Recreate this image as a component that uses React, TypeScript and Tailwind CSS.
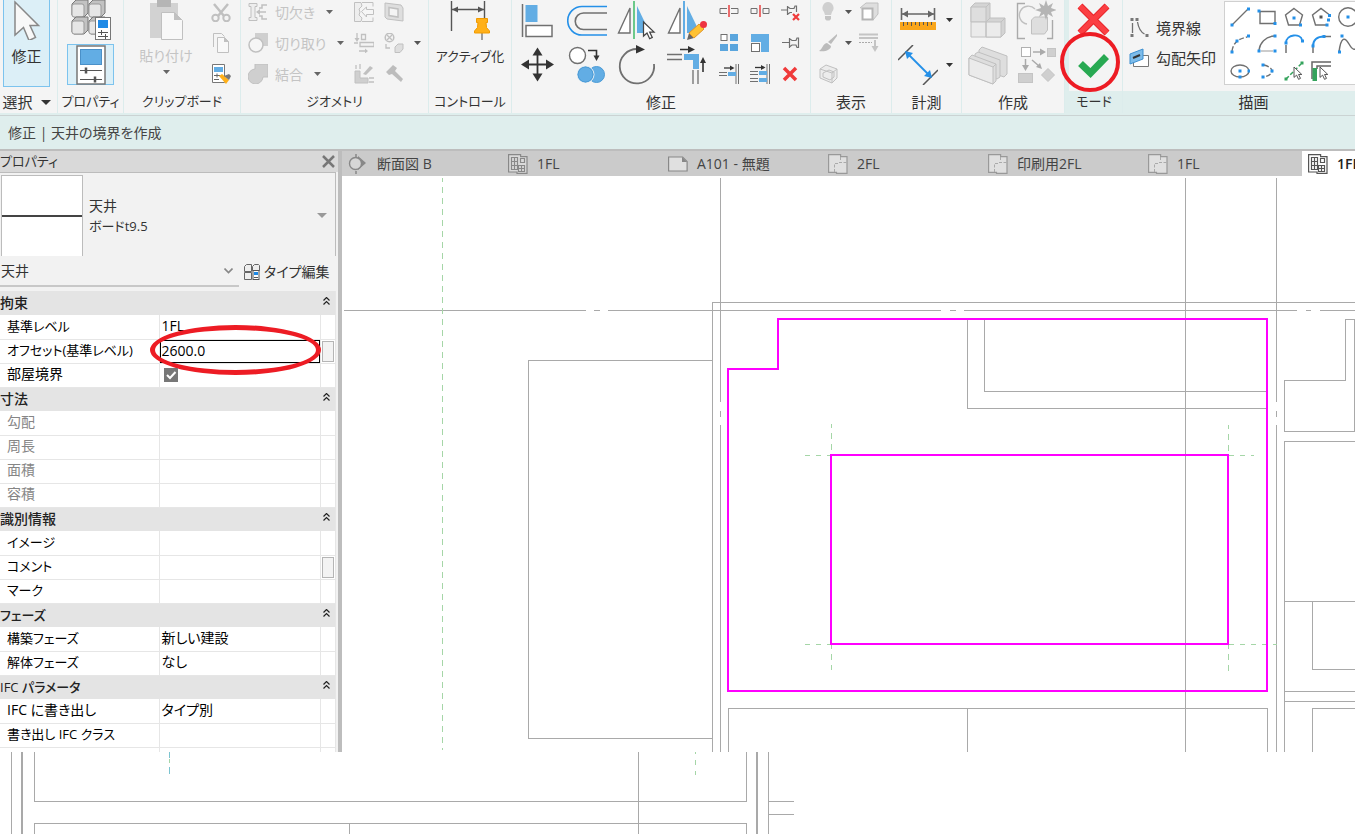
import { Fragment, ReactNode } from 'react';

interface IconProps {
  size?: number;
  children: ReactNode;
}

function Icon({ size = 20, children }: IconProps) {
  return (
    <svg width={size} height={size} viewBox={`0 0 ${size} ${size}`} fill="none" className="block shrink-0" aria-hidden="true">
      {children}
    </svg>
  );
}

function Caret({ className = 'h-[4px] w-[7px] text-[#555]' }: { className?: string }) {
  return (
    <svg viewBox="0 0 7 4" preserveAspectRatio="none" className={`block shrink-0 ${className}`} aria-hidden="true">
      <path d="M0 0h7L3.5 4z" fill="currentColor" />
    </svg>
  );
}

function Cursor({ x, y, scale = 1 }: { x: number; y: number; scale?: number }) {
  return (
    <path
      d="M0 0v16l4-3.500 3 6.500 3-1.500-3-6h5z"
      transform={`translate(${x} ${y}) scale(${scale})`}
      fill="#fff"
      stroke="#444"
      strokeWidth="1.4"
    />
  );
}

// blue grips on the draw tools
function Grips({ at, color = '#2490e8' }: { at: number[][]; color?: string }) {
  return (
    <>
      {at.map(([x, y]) => (
        <rect key={`${x}-${y}`} x={x - 1.5} y={y - 1.5} width="3" height="3" fill={color} />
      ))}
    </>
  );
}

const OFF = '#c0c0c0';
const OFF_FILL = '#dedede';
const BLUE = '#62ade4';
const INK = '#333';
const LINE = '#707070';

/* ---------- 40px icons ---------- */

const ModifyIcon = () => (
  <Icon size={40}>
    <path d="M8 2v33l8.500-7.500 5.500 13 6.500-3-5.500-12h8.500z" fill="#f8f8f8" stroke="#888" strokeWidth="1.5" />
  </Icon>
);

const TypePropsIcon = () => (
  <Icon size={40}>
    {[[0, 0], [17, 0], [0, 17], [17, 17]].map(([x, y]) => (
      <g key={`${x}${y}`} transform={`translate(${x} ${y})`} stroke="#777">
        <path d="M1 4l4-4h12v13l-4 4H3l-2-2z" fill="#c2c2c2" />
        <rect x="1" y="4" width="12" height="13" rx="2" fill="#e6e6e6" stroke="#999" />
      </g>
    ))}
    <rect x="24.500" y="17.500" width="15" height="22" fill="#fff" stroke="#777" />
    <rect x="27" y="20" width="10" height="8" fill="#1f8ae6" />
    <path d="M27 32.500h10M27 36.500h10M30.500 30v5M34.500 34v5" stroke="#555" />
  </Icon>
);

const PropertiesIcon = () => (
  <Icon size={40}>
    <rect x="6" y="1" width="28" height="38" fill="#fff" stroke="#777" strokeWidth="1.500" />
    <rect x="9.500" y="4.500" width="21" height="15" fill={BLUE} stroke="#4a90c8" />
    <path d="M9 25.500h22M9 34.500h22" stroke="#555" strokeWidth="1.200" />
    <path d="M15 22.500v6M24 31.500v6" stroke="#555" strokeWidth="2.500" />
  </Icon>
);

const PasteIcon = () => (
  <Icon size={40}>
    <path d="M4 3h28v35H4z" fill="#d2d2d2" />
    <path d="M11 0h14v7H11z" fill="#b5b5b5" />
    <path d="M15.500 12.500h13l8 8v19h-21z" fill="#f8f8f8" stroke={OFF} />
    <path d="M28 12v8h8z" fill={OFF} />
  </Icon>
);

const ActivateIcon = () => (
  <Icon size={40}>
    <path d="M1.500 1v30M34.500 1v17M2 9.500h32" stroke="#555" strokeWidth="1.400" />
    <path d="M2 9.500l6-3v6zM34 9.500l-6-3v6z" fill="#555" />
    <path d="M32 33v7" stroke="#777" strokeWidth="1.400" />
    <path d="M26.500 18.500h11v4H36l.500 5 3 3.500v2h-15v-2l3-3.500.500-5h-1.500z" fill="#ffb019" stroke="#f09a00" />
  </Icon>
);

const AlignIcon = () => (
  <Icon size={40}>
    <path d="M5.500 4v33" stroke={LINE} strokeWidth="1.500" />
    <rect x="8.500" y="5" width="12" height="17" fill={BLUE} />
    <rect x="9" y="25.500" width="26" height="11" fill="#fff" stroke={LINE} strokeWidth="1.500" />
  </Icon>
);

const OffsetIcon = () => (
  <Icon size={40}>
    <path d="M40 6.500H15a14.200 14.200 0 0 0 0 28.500h25" stroke="#2490e8" strokeWidth="1.600" />
    <path d="M40 13H16.500a8.200 8.200 0 0 0 0 16.500H40" stroke={LINE} strokeWidth="1.600" />
  </Icon>
);

const MirrorPickIcon = () => (
  <Icon size={40}>
    <path d="M1.500 33h11.500V8z" fill="#fff" stroke={LINE} strokeWidth="1.400" />
    <path d="M17 1v38" stroke="#6cc98a" strokeWidth="2" />
    <path d="M20 6l13 27H20z" fill={BLUE} />
    <Cursor x={26.500} y={22} scale={0.88} />
  </Icon>
);

const MirrorDrawIcon = () => (
  <Icon size={40}>
    <path d="M1.500 33h11.500V8z" fill="#fff" stroke={LINE} strokeWidth="1.400" />
    <path d="M17 1v38" stroke={BLUE} strokeWidth="2" />
    <path d="M20 6l13 27H20z" fill={BLUE} />
    <path d="M20 40l2-7 5 5z" fill="#666" />
    <path d="M22 33l10-9 5 5-10 9z" fill="#ffc233" stroke="#e0952a" />
    <circle cx="36.500" cy="24.500" r="3.500" fill="#ee3340" />
  </Icon>
);

const MoveIcon = () => (
  <Icon size={40}>
    <path d="M20.500 7v25M8 19.500h25" stroke={INK} strokeWidth="1.800" />
    <path d="M20.500 2.500l5 8h-10zM20.500 36.500l5-8h-10zM4 19.500l8-5v10zM37 19.500l-8-5v10z" fill={INK} />
  </Icon>
);

const CopyIcon = () => (
  <Icon size={40}>
    <circle cx="10.500" cy="10.500" r="8" fill="#fff" stroke={LINE} strokeWidth="1.400" />
    <path d="M21 5.500h8.500V12" stroke={INK} strokeWidth="1.600" />
    <path d="M26.500 10.500h6l-3 5.500z" fill={INK} />
    <circle cx="29.500" cy="29.500" r="8" fill={BLUE} stroke="#4b9bd6" />
    <circle cx="18.500" cy="29.500" r="8.500" fill={BLUE} stroke="#f4f4f4" />
    <circle cx="18.500" cy="29.500" r="7.500" stroke="#4b9bd6" />
  </Icon>
);

const RotateIcon = () => (
  <Icon size={40}>
    <path d="M37 19a17.200 17.200 0 1 1-17-15" stroke={LINE} strokeWidth="1.800" />
    <path d="M19 0l9 4.500-9 4z" fill={INK} />
  </Icon>
);

const TrimIcon = () => (
  <Icon size={40}>
    <path d="M0 9.500h15M0 14.500h15M26 25v14M31 25v14" stroke={LINE} strokeWidth="1.300" />
    <path d="M17 9h15v15h-6v-9h-9z" fill={BLUE} />
    <path d="M13 4.500h10M36 27V17" stroke={INK} strokeWidth="1.600" />
    <path d="M21 1l7 3.500-7 3.500zM33 18l3-6 3 6z" fill={INK} />
  </Icon>
);

const MeasureIcon = () => (
  <Icon size={40}>
    <path d="M3.500 8v12M36.500 8v12M4 14h32" stroke="#666" strokeWidth="1.600" />
    <path d="M4 14l6-3.500v7zM36 14l-6-3.500v7z" fill="#666" />
    <rect x="2" y="22" width="36" height="8" fill="#f9a51a" />
    <path d="M5.500 22v4M9.500 22v3M13.500 22v4M17.500 22v3M21.500 22v4M25.500 22v3M29.500 22v4M33.500 22v3" stroke="#555" />
  </Icon>
);

const DimensionIcon = () => (
  <Icon size={40}>
    <path d="M0 15L15 0M25 40l15-15" stroke="#555" strokeWidth="1.500" />
    <path d="M9 8l23 23" stroke="#2490e8" strokeWidth="1.800" />
    <path d="M7 6l8 2-6 6zM34 33l-8-2 6-6z" fill="#2490e8" />
  </Icon>
);

const GroupIcon = () => (
  <Icon size={40}>
    <g stroke={OFF} strokeLinejoin="round">
      <path d="M3 7l4-4h15v15l-4 4H3z" fill="#d4d4d4" />
      <path d="M3 7h15v15H3z" fill={OFF_FILL} />
      <path d="M18 22l4-4h15v15l-4 4H18z" fill="#d4d4d4" />
      <path d="M3 22h15v15H3zM18 22h15v15H18z" fill="#ebebeb" />
      <path d="M18 7l4-4M33 22l4-4" />
    </g>
  </Icon>
);

const CreateGroupIcon = () => (
  <Icon size={40}>
    <path d="M9 3.500H1.500v35H9M31 38.500h5.500V20" stroke="#aaa" strokeWidth="1.400" />
    <path d="M19 9a9 9 0 1 0-8 15" stroke={OFF} strokeWidth="1.400" />
    <path d="M15.500 20l3-3h13v13l-3 4h-13z" fill={OFF_FILL} stroke={OFF} />
    <path d="M30 0l2 6 5-3-2 5 6 2-6 2 2 5-5-3-2 6-2-6-5 3 2-5-6-2 6-2-2-5 5 3z" fill="#b5b5b5" />
  </Icon>
);

const AssemblyIcon = () => (
  <Icon size={40}>
    <g stroke={OFF} strokeLinejoin="round" fill={OFF_FILL}>
      <path d="M11 5l3-3 25 9v18l-3 3-25-9z" />
      <path d="M7 9l3-2 22 8v17l-3 2-22-8z" />
      <path d="M1 13l3-3 24 9v17l-3 3-24-9z" />
      <path d="M1 13l24 9v17l-24-9z" fill="#ebebeb" />
      <path d="M25 22l3-3" />
    </g>
  </Icon>
);

const PartsIcon = () => (
  <Icon size={40}>
    <rect x="5.500" y="2.500" width="9" height="9" fill="#fff" stroke="#b0b0b0" />
    <g fill="#cfcfcf" stroke="#c4c4c4">
      <rect x="31.500" y="3.500" width="8" height="8" />
      <rect x="2.500" y="28.500" width="14" height="9" />
      <path d="M32 23.500l6.500 6.500-6.500 6.500-6.500-6.500z" />
    </g>
    <path d="M17 7h8M9.500 14v8M16 15l7 6" stroke="#aaa" strokeWidth="1.500" />
    <path d="M24 3.500l6 3.500-6 3.500zM6 20h7l-3.500 6zM26 24l-2-6-4 4z" fill="#aaa" />
  </Icon>
);

const CancelIcon = () => (
  <Icon size={40}>
    <path d="M7 6l27 27M34 6L7 33" stroke="#e8262c" strokeWidth="7" />
    <path d="M7 6l27 27M34 6L7 33" stroke="#fb3f43" strokeWidth="5" />
  </Icon>
);

const FinishIcon = () => (
  <Icon size={40}>
    <path d="M7.500 18.500l10 9.500L33.500 11.500" stroke="#28a952" strokeWidth="7" />
  </Icon>
);

/* ---------- 20px icons ---------- */

const CutIcon = () => (
  <Icon>
    <path d="M3 2l10 12M17 2L7 14" stroke={OFF} strokeWidth="2.500" />
    <circle cx="4.500" cy="16" r="3.200" stroke={OFF} strokeWidth="2" />
    <circle cx="15.500" cy="16" r="3.200" stroke={OFF} strokeWidth="2" />
  </Icon>
);

const CopyClipIcon = () => (
  <Icon>
    <path d="M2.500 14V.500h8l3 3" stroke={OFF} />
    <path d="M6.500 4.500h7l4 4v11h-11z" fill="#f8f8f8" stroke={OFF} />
    <path d="M13 4v5h5z" fill={OFF} />
  </Icon>
);

const MatchIcon = () => (
  <Icon>
    <path d="M1.500.500h12v18h-12z" fill="#fff" stroke="#777" />
    <rect x="3" y="3" width="9" height="5" fill={BLUE} />
    <path d="M3 11.500h6M3 15.500h5M6 9.500v4" stroke="#666" />
    <path d="M8 12l3-2 7 6-3 4z" fill="#ffb019" />
    <path d="M13 12l5-2 2 2-2 4z" fill="#777" />
  </Icon>
);

const CopeIcon = () => (
  <Icon>
    <path d="M1 1.500h8v3H7v11h2v3H1v-3h2v-11H1z" fill="#eee" stroke={OFF} />
    <path d="M19 3h-5v3l-3 0M19 17h-5v-3h-3M9 10h9" stroke={OFF} strokeWidth="1.500" />
    <path d="M8 10l4-3v6z" fill={OFF} />
  </Icon>
);

const CutGeomIcon = () => (
  <Icon>
    <path d="M7 0h13v13h-5L7 5z" fill="#cfcfcf" />
    <circle cx="8" cy="12" r="7" fill="#f6f6f6" stroke={OFF} strokeWidth="1.500" />
  </Icon>
);

const JoinIcon = () => (
  <Icon>
    <path d="M7 0h13v13h-5a7.500 7.500 0 1 1-8-8z" fill="#cfcfcf" stroke={OFF} />
  </Icon>
);

const WallOpenIcon = () => (
  <Icon>
    <path d="M8 4l-1-3.500H.500v19H7L8 16l-3-3 1-3-1-3z" fill="#eee" stroke={OFF} />
    <path d="M7.500 9.500l5-4.500v2.500h7v5h-7V15z" fill="#f6f6f6" stroke={OFF} />
    <path d="M8 .500h11v4M8 19.500h11v-4" stroke={OFF} />
  </Icon>
);

const FaceIcon = () => (
  <Icon>
    <path d="M1 1l16 2 2 3v13L3 17l-2-2z" fill={OFF_FILL} stroke={OFF} />
    <path d="M5 5.500l9 1.500v8l-9-1.500z" fill="#f4f4f4" stroke={OFF} strokeWidth="1.500" />
  </Icon>
);

const BeamIcon = () => (
  <Icon>
    <path d="M3 0v6M7.500 1.500h4v5h-4zM6 9.500h14v4H6zM0 10h4M5 18h6" stroke={OFF} strokeWidth="1.300" />
    <path d="M.500 5h5L3 9zM11 15.500v5l3-2.500z" fill={OFF} />
  </Icon>
);

const SplitFaceIcon = () => (
  <Icon>
    <circle cx="5.500" cy="4.500" r="4.300" stroke={OFF} strokeWidth="1.500" />
    <path d="M3 2l5 5M8 2L3 7M2 11v4h4" stroke={OFF} strokeWidth="1.300" />
    <path d="M11 14l3-3h5v5l-3 3.500h-5z" fill={OFF_FILL} stroke={OFF} />
  </Icon>
);

const PaintJoinIcon = () => (
  <Icon>
    <path d="M1 7h5v7h8v5H1z" fill="#cfcfcf" stroke={OFF} />
    <path d="M2 1v4M6 0v5M15 14h5M15 18h5" stroke={OFF} strokeWidth="1.300" />
    <path d="M9 10l7-8 3 2-7 7z" fill={OFF} />
  </Icon>
);

const HammerIcon = () => (
  <Icon>
    <path d="M2 8l7-7 4 3-2 3 8 8-2 3-9-8-3 1z" fill="#bdbdbd" />
  </Icon>
);

const SplitIcon = () => (
  <Icon>
    <path d="M8 6.500H1v5h7M12 6.500h7v5h-7" stroke={LINE} />
    <path d="M10 3v12" stroke="#e84040" strokeWidth="1.500" />
  </Icon>
);

const SplitGapIcon = () => (
  <Icon>
    <path d="M1 6.500h6v5H1zM13 6.500h6v5h-6z" stroke={LINE} />
    <path d="M10 3v12" stroke="#e84040" strokeWidth="1.500" />
  </Icon>
);

const PinIcon = () => (
  <Icon>
    <path
      d="M1 9.500h7M8.500 5v10M9 6l2 1.500h4l1-2.500h1.500v9.500H16L15 12h-4l-2 1.500"
      stroke={LINE}
      strokeWidth="1.200"
    />
  </Icon>
);

const UnpinIcon = () => (
  <Icon>
    <path d="M0 8h6M6.500 4v9M7 5l2 1.500h4l1-2.500h1.500v6M7 12l2-1.500h2" stroke={LINE} strokeWidth="1.200" />
    <path d="M12 12l6 6M18 12l-6 6" stroke="#f03a3a" strokeWidth="2.200" />
  </Icon>
);

const ArrayIcon = () => (
  <Icon>
    <rect x="2" y="1.500" width="6" height="6" fill="#fff" stroke={LINE} />
    <path d="M11 1h8v7h-8zM1 11h8v7H1zM11 11h8v7h-8z" fill="#5aa5dd" />
  </Icon>
);

const ScaleIcon = () => (
  <Icon>
    <path d="M1 1h18v18h-8V9H1z" fill={BLUE} />
    <rect x="1.500" y="10.500" width="8" height="8" fill="#fff" stroke={LINE} />
  </Icon>
);

const TrimSingleIcon = () => (
  <Icon>
    <path d="M0 8.500h8M0 11.500h8M17 0v20M19.500 0v20" stroke={LINE} />
    <path d="M9 8h8v4H9z" fill={BLUE} />
    <path d="M5 4h7" stroke={INK} strokeWidth="1.300" />
    <path d="M11 1.500L15.500 4 11 6.500z" fill={INK} />
  </Icon>
);

const TrimMultiIcon = () => (
  <Icon>
    <path d="M0 7.500h8M0 10.500h8M0 14.500h8M0 17.500h8M17 0v20M19.500 0v20" stroke={LINE} />
    <path d="M9 7h8v4H9zM9 14h8v4H9z" fill={BLUE} />
    <path d="M5 3.500h7" stroke={INK} strokeWidth="1.300" />
    <path d="M11 1l4.500 2.500L11 6z" fill={INK} />
  </Icon>
);

const DeleteIcon = () => (
  <Icon>
    <path d="M3 4l12 12M15 4L3 16" stroke="#f03a3a" strokeWidth="3.500" />
  </Icon>
);

const BulbIcon = () => (
  <Icon>
    <path d="M10 0a6 6 0 0 1 4 10l-1 3H7l-1-3a6 6 0 0 1 4-10z" fill="#cfcfcf" />
    <path d="M7 14h6v3l-1.500 1.500h-3L7 17z" fill="#c4c4c4" />
  </Icon>
);

const BrushIcon = () => (
  <Icon>
    <path d="M19 1L10 9l3 2 6-8z" fill="#bbb" />
    <path d="M9 10l4 3c0 4-6 6-12 5 4-2 3-7 8-8z" fill="#bbb" />
  </Icon>
);

const BoxIcon = () => (
  <Icon>
    <path d="M2 5l6-4 11 4v9l-5 5-12-5z" fill="#ececec" stroke={OFF} />
    <path d="M2 5l12 4 5-4M14 9v10M5 9l6-3 5 2v5l-4 3-7-3z" stroke={OFF} />
  </Icon>
);

const DisplaceIcon = () => (
  <Icon>
    <path d="M1 6l6-5h12v11l-5 6" fill={OFF_FILL} stroke={OFF} />
    <rect x="3.500" y="6.500" width="10" height="11" fill="#fff" stroke="#b5b5b5" strokeWidth="2" />
  </Icon>
);

const LineworkIcon = () => (
  <Icon>
    <path d="M0 1.500h19M0 5h19" stroke="#c4c4c4" strokeWidth="2" />
    <path d="M0 9.500h13" stroke="#aaa" strokeDasharray="2 1" />
    <path d="M16 7v7" stroke="#c4c4c4" strokeWidth="2" />
    <path d="M12.500 13h7L16 19z" fill="#c4c4c4" />
  </Icon>
);

const BoundaryIcon = () => (
  <Icon>
    <path d="M3.500 5v10M8.500 4c1 6 3 10 7 12" stroke={LINE} strokeWidth="1.300" />
    <Grips at={[[3, 1.500], [8, 1.500], [3, 17.500], [18, 17.500]]} color="#777" />
  </Icon>
);

const SlopeIcon = () => (
  <Icon>
    <path d="M4.500 7.500h15v11h-15z" fill="#fff" stroke="#777" />
    <path d="M1 6l13-5v10L1 16z" fill="#7dbcea" stroke="#3d8fd0" />
    <path d="M4 10l7-3" stroke="#333" strokeWidth="2" />
  </Icon>
);

const EditTypeIcon = () => (
  <Icon>
    <path d="M2.500 4.500l2-2h5v7h-7zM10.500 4.500l2-2h4l1 1v5h-7zM2.500 10.500h7v7h-7z" fill="#eee" stroke="#666" />
    <rect x="11" y="8.500" width="6" height="9" fill="#fff" stroke="#555" />
    <rect x="12" y="10" width="4" height="3" fill="#1f8ae6" />
    <path d="M12 15.500h4" stroke="#555" />
  </Icon>
);

/* view tabs */
const SectionTabIcon = () => (
  <Icon>
    <path d="M8 0v3M8 17v3" stroke="#888" strokeWidth="1.500" />
    <path d="M10 2l8 7-8 7z" fill="#888" />
    <circle cx="7.500" cy="9.500" r="6" fill="#d6d6d6" stroke="#888" strokeWidth="1.400" />
  </Icon>
);

const PlanTabIcon = ({ active = false }: { active?: boolean }) => (
  <Icon>
    <g stroke={active ? '#555' : '#888'} strokeWidth="1.200">
      <path d="M.600 18V.600h12v2h6.400v16.800H9V18z" fill={active ? '#fff' : '#dadada'} />
      <path d="M3.500 3.500h6v12h-6zM6.500 3.500v12M3.500 7.500h6M3.500 11.500h6M12.500 4.500h4v4h-4zM10.500 11.500h6v6h-6zM13.500 11.500v6M10.500 14.500h6" />
    </g>
  </Icon>
);

const SheetTabIcon = () => (
  <Icon>
    <path d="M.600 3h14l4.500 4.500V17H.600z" fill="#e0e0e0" stroke="#888" strokeWidth="1.200" />
    <path d="M14 3v5h5z" fill="#888" />
  </Icon>
);

const CeilingTabIcon = () => (
  <Icon>
    <path d="M.600 18.400V.600h12v2h6.400v16.800H8.500v-1z" fill="#e0e0e0" stroke="#999" strokeWidth="1.200" />
    <path d="M6.500 18V9.500h5M12.500 3v4M11 8.500h8" stroke="#aaa" strokeDasharray="3 1.500" />
  </Icon>
);

const drawTools: { name: string; icon: ReactNode }[] = [
  { name: '線分', icon: <><path d="M2 18L18 2" stroke={LINE} strokeWidth="1.300" /><Grips at={[[2, 18], [18.500, 2]]} /></> },
  { name: '長方形', icon: <><path d="M3 4.500h15v12H3z" stroke={LINE} strokeWidth="1.400" /><Grips at={[[2, 4], [18, 16.500]]} /></> },
  { name: '内接ポリゴン', icon: <><path d="M10 1.500l8.500 6.500-3 10h-11l-3-10z" stroke={LINE} strokeWidth="1.400" /><Grips at={[[10, 11], [16.500, 18]]} /></> },
  { name: '外接ポリゴン', icon: <><path d="M15.500 18h-11l-3-10L10 1.500l8 6" stroke={LINE} strokeWidth="1.400" /><Grips at={[[10, 10]]} color="#555" /><Grips at={[[18.500, 8.500], [17.500, 13], [16, 18]]} /></> },
  { name: '円', icon: <><circle cx="10" cy="10" r="9.300" stroke={LINE} strokeWidth="1.400" /><Grips at={[[10, 10]]} /></> },
  { name: '円弧 (始点-終点)', icon: <><path d="M2 17c1-7 5-12 15-14" stroke={LINE} strokeWidth="1.400" strokeDasharray="5 2" /><Grips at={[[2, 18], [7, 7], [18.500, 2]]} /></> },
  { name: '円弧 (中心)', icon: <><path d="M2 16C3 9 8 3 17 2" stroke={LINE} strokeWidth="1.400" /><path d="M4 17h12" stroke="#999" /><Grips at={[[2, 17], [18, 2], [18, 17]]} /></> },
  { name: '円弧 (接線)', icon: <><path d="M2 19v-8" stroke={LINE} strokeWidth="1.500" /><path d="M2 9C2 0 17-1 18 6" stroke="#2490e8" strokeWidth="1.800" /><Grips at={[[2, 9], [18.500, 7]]} /></> },
  { name: '円弧 (フィレット)', icon: <><path d="M2 19v-7M14 2.500h6" stroke={LINE} strokeWidth="1.500" /><path d="M2 12C2 6 6 2.500 13 2.500" stroke="#2490e8" strokeWidth="1.800" /><Grips at={[[2, 12], [13, 2.500]]} /></> },
  { name: 'スプライン', icon: <><path d="M1 18C3 2 7 3 11 10s6 6 9 3" stroke={LINE} strokeWidth="1.500" /><Grips at={[[1.500, 18], [4, 2]]} /></> },
  { name: '楕円', icon: <><ellipse cx="10" cy="10" rx="9" ry="6" stroke={LINE} strokeWidth="1.400" /><Grips at={[[10, 10], [19, 10], [10, 16]]} /></> },
  { name: '部分楕円', icon: <><path d="M7 4c4 1 8 3 8 6s-4 5-8 6" stroke={LINE} strokeWidth="1.400" strokeDasharray="5 2" /><Grips at={[[6, 4], [15, 10], [6, 16]]} /></> },
  { name: '線を選択', icon: <><path d="M2 18L17 3" stroke="#35a35c" strokeWidth="1.500" strokeDasharray="4 2" /><Grips at={[[2, 18], [18, 2]]} color="#35a35c" /><Cursor x={10} y={6} scale={0.65} /></> },
  { name: '壁を選択', icon: <><path d="M20 1H1v17M20 5H6v3" stroke="#666" strokeWidth="1.500" /><rect x="1.500" y="7" width="4.500" height="13" fill="#35a35c" /><Cursor x={9} y={6} scale={0.65} /></> },
];

interface PanelProps {
  label: string;
  className: string;
  labelClass?: string;
  labelEnd?: ReactNode;
  children: ReactNode;
}

function Panel({ label, className, labelClass = '', labelEnd, children }: PanelProps) {
  return (
    <section className={`flex h-[113px] shrink-0 flex-col border-r border-[#dcecec] bg-[#f4f4f4] ${className}`} aria-label={label}>
      <div className="flex h-[91px] shrink-0">{children}</div>
      <div className={`flex h-[22px] items-center justify-center gap-2 whitespace-nowrap ${labelClass}`}>
        {label}
        {labelEnd}
      </div>
    </section>
  );
}

function Tool({ name, children, className = '' }: { name: string; children: ReactNode; className?: string }) {
  return (
    <button type="button" aria-label={name} className={`flex items-center justify-center ${className}`}>
      {children}
    </button>
  );
}

function Ribbon() {
  return (
    <header className="flex overflow-hidden border-b border-[#cbd3d3] bg-[#dfeeed] pb-[2px] text-[15px] text-[#333]">
      <Panel label="選択" className="w-[58px]" labelClass="pr-1" labelEnd={<Caret className="h-[5px] w-[10px] text-[#333]" />}>
        <button type="button" className="mx-[3px] flex h-[87px] w-[47px] flex-col items-center border border-t-0 border-[#7cc3ee] bg-[#dceff7]">
          <ModifyIcon />
          <span className="mt-1.5 leading-5">修正</span>
        </button>
      </Panel>
      <Panel label="プロパティ" className="w-[66px] text-[13px]">
        <div className="flex w-full flex-col items-center gap-[4px]">
          <Tool name="タイプ プロパティ"><TypePropsIcon /></Tool>
          <Tool name="プロパティ パレット" className="h-[41px] w-[47px] border border-[#7cc3ee] bg-[#dceff7]"><PropertiesIcon /></Tool>
        </div>
      </Panel>
      <Panel label="クリップボード" className="w-[117px] text-[13px]">
        <button type="button" className="ml-3 flex w-[60px] flex-col items-center text-[14px] text-[#c4c4c4]">
          <PasteIcon />
          <span className="mt-1.5 leading-5">貼り付け</span>
          <Caret className="mt-1 h-[4px] w-[7px] text-[#666]" />
        </button>
        <div className="ml-[15px] flex flex-col gap-[11px] pt-[2px]">
          <Tool name="切り取り"><CutIcon /></Tool>
          <Tool name="コピー"><CopyClipIcon /></Tool>
          <Tool name="タイプ プロパティを一致"><MatchIcon /></Tool>
        </div>
      </Panel>
      <Panel label="ジオメトリ" className="w-[188px] text-[13px]">
        <div className="flex w-[105px] flex-col gap-[11px] pt-[2px] pl-[7px] text-[14px] text-[#c4c4c4]">
          <button type="button" className="flex h-5 items-center gap-[7px]"><CopeIcon /><span>切欠き</span><Caret className="ml-1 h-[4px] w-[7px] text-[#666]" /></button>
          <button type="button" className="flex h-5 items-center gap-[7px]"><CutGeomIcon /><span>切り取り</span><Caret className="ml-1 h-[4px] w-[7px] text-[#666]" /></button>
          <button type="button" className="flex h-5 items-center gap-[7px]"><JoinIcon /><span>結合</span><Caret className="ml-1 h-[4px] w-[7px] text-[#666]" /></button>
        </div>
        <div className="ml-[8px] grid h-[84px] grid-cols-[20px_20px_7px] items-center gap-x-[10px] gap-y-[11px] pt-[2px]">
          <Tool name="壁開口部"><WallOpenIcon /></Tool>
          <Tool name="面を分割"><FaceIcon /></Tool>
          <span />
          <Tool name="梁/柱の結合"><BeamIcon /></Tool>
          <Tool name="ペイント"><SplitFaceIcon /></Tool>
          <Caret />
          <Tool name="壁結合"><PaintJoinIcon /></Tool>
          <Tool name="解体"><HammerIcon /></Tool>
        </div>
      </Panel>
      <Panel label="コントロール" className="w-[83px] text-[13px]">
        <button type="button" className="flex w-full flex-col items-center whitespace-nowrap">
          <ActivateIcon />
          <span className="mt-1.5 text-[13px] leading-5">アクティブ化</span>
        </button>
      </Panel>
      <Panel label="修正" className="w-[299px]">
        <div className="ml-[5px] grid grid-cols-4 grid-rows-[40px_40px] gap-x-[10px] gap-y-[5px]">
          <Tool name="位置合わせ"><AlignIcon /></Tool>
          <Tool name="オフセット"><OffsetIcon /></Tool>
          <Tool name="鏡像化 - 軸を選択"><MirrorPickIcon /></Tool>
          <Tool name="鏡像化 - 軸を描画"><MirrorDrawIcon /></Tool>
          <Tool name="移動"><MoveIcon /></Tool>
          <Tool name="コピー"><CopyIcon /></Tool>
          <Tool name="回転"><RotateIcon /></Tool>
          <Tool name="コーナーへトリム/延長"><TrimIcon /></Tool>
        </div>
        <div className="ml-[12px] grid h-[84px] grid-cols-[20px_20px_20px] gap-x-[11px] gap-y-[11px] pt-[2px]">
          <Tool name="要素を分割"><SplitIcon /></Tool>
          <Tool name="隙間で分割"><SplitGapIcon /></Tool>
          <Tool name="ピンを外す"><UnpinIcon /></Tool>
          <Tool name="配列"><ArrayIcon /></Tool>
          <Tool name="尺度"><ScaleIcon /></Tool>
          <Tool name="ピン"><PinIcon /></Tool>
          <Tool name="単一要素をトリム"><TrimSingleIcon /></Tool>
          <Tool name="複数要素をトリム"><TrimMultiIcon /></Tool>
          <Tool name="削除"><DeleteIcon /></Tool>
        </div>
      </Panel>
      <Panel label="表示" className="w-[81px]">
        <div className="ml-[7px] grid h-[84px] grid-cols-[20px_7px_20px] items-center gap-x-[7px] gap-y-[11px] pt-[2px]">
          <Tool name="非表示"><BulbIcon /></Tool>
          <Caret />
          <Tool name="要素を移動表示"><DisplaceIcon /></Tool>
          <Tool name="グラフィックスを上書き"><BrushIcon /></Tool>
          <Caret />
          <Tool name="ラインワーク"><LineworkIcon /></Tool>
          <Tool name="選択ボックス"><BoxIcon /></Tool>
        </div>
      </Panel>
      <Panel label="計測" className="w-[70px]">
        <div className="ml-[6px] grid grid-cols-[40px_7px] grid-rows-[40px_40px] items-center gap-x-[8px] gap-y-[5px]">
          <Tool name="計測"><MeasureIcon /></Tool>
          <Caret className="h-[4px] w-[7px] text-[#333]" />
          <Tool name="寸法"><DimensionIcon /></Tool>
          <Caret className="h-[4px] w-[7px] text-[#333]" />
        </div>
      </Panel>
      <Panel label="作成" className="w-[103px]">
        <div className="ml-[6px] grid grid-cols-[40px_40px] grid-rows-[40px_40px] gap-x-[8px] gap-y-[5px]">
          <Tool name="類似オブジェクト"><GroupIcon /></Tool>
          <Tool name="グループを作成"><CreateGroupIcon /></Tool>
          <Tool name="アセンブリを作成"><AssemblyIcon /></Tool>
          <Tool name="パーツを作成"><PartsIcon /></Tool>
        </div>
      </Panel>
      <Panel label="モード" className="ml-1 w-[54px] text-[13px]" labelClass="bg-[#dfeeed] pr-[3px]">
        <div className="relative flex w-full flex-col items-center gap-[5px] pr-[5px]">
          <Tool name="編集モードをキャンセル"><CancelIcon /></Tool>
          <Tool name="編集モードを終了"><FinishIcon /></Tool>
          <div className="pointer-events-none absolute top-[32px] -left-[9px] size-[60px] rounded-full border-4 border-[#ed1c24]" />
        </div>
      </Panel>
      <Panel label="描画" className="w-[262px]" labelClass="bg-[#dfeeed]">
        <div className="flex w-[101px] flex-col gap-[10px] pt-[18px] pl-[6px]">
          <button type="button" className="flex h-5 items-center gap-[7px] whitespace-nowrap"><BoundaryIcon />境界線</button>
          <button type="button" className="flex h-5 items-center gap-[7px] whitespace-nowrap"><SlopeIcon />勾配矢印</button>
        </div>
        <div className="mt-px grid h-[84px] grid-cols-[repeat(5,20px)] content-start gap-[7px] border border-[#d0d0d0] bg-white px-[5px] py-[5px]">
          {drawTools.map((tool) => (
            <Tool key={tool.name} name={tool.name}>
              <Icon>{tool.icon}</Icon>
            </Tool>
          ))}
        </div>
      </Panel>
    </header>
  );
}

interface Property {
  name: string;
  value?: string;
  kind?: 'input' | 'check';
  more?: boolean;
  readOnly?: boolean;
}

const sections: { title: string; rows: Property[] }[] = [
  {
    title: '拘束',
    rows: [
      { name: '基準レベル', value: '1FL' },
      { name: 'オフセット(基準レベル)', value: '2600.0', kind: 'input', more: true },
      { name: '部屋境界', kind: 'check' },
    ],
  },
  {
    title: '寸法',
    rows: [
      { name: '勾配', readOnly: true },
      { name: '周長', readOnly: true },
      { name: '面積', readOnly: true },
      { name: '容積', readOnly: true },
    ],
  },
  { title: '識別情報', rows: [{ name: 'イメージ' }, { name: 'コメント', more: true }, { name: 'マーク' }] },
  {
    title: 'フェーズ',
    rows: [
      { name: '構築フェーズ', value: '新しい建設' },
      { name: '解体フェーズ', value: 'なし' },
    ],
  },
  { title: 'IFC パラメータ', rows: [{ name: 'IFC に書き出し', value: 'タイプ別' }, { name: '書き出し IFC クラス' }] },
];

// names with a run of katakana are set a size smaller
const nameSize = (name: string) => (/[ァ-ー]{3}/.test(name) ? 'text-[13px]' : 'text-[14px]');

function PropertyValue({ row }: { row: Property }) {
  if (row.kind === 'input') {
    return (
      <div className="relative">
        <input
          aria-label={row.name}
          defaultValue={row.value}
          className="block h-[23px] w-full border border-black bg-white pb-[2px] pl-px outline-none"
        />
        <div className="pointer-events-none absolute -top-[15px] -right-[1px] -left-[10px] h-[50px] rounded-[50%] border-[5px] border-[#ed1c24]" />
      </div>
    );
  }
  if (row.kind === 'check') {
    return (
      <label className="relative ml-[4px] block size-[14px]">
        <input type="checkbox" aria-label={row.name} defaultChecked className="block size-[14px] appearance-none bg-[#777]" />
        <svg viewBox="0 0 14 14" className="pointer-events-none absolute inset-0" fill="none" aria-hidden="true">
          <path d="M3 7l3 3 5.500-6" stroke="#fff" strokeWidth="2" />
        </svg>
      </label>
    );
  }
  return <span className="block pb-[2px] pl-[2px]">{row.value}</span>;
}

function PropertyTable() {
  return (
    <table className="w-full table-fixed border-collapse text-[14px] leading-5 text-black">
      <colgroup>
        <col className="w-[159px]" />
        <col />
        <col className="w-[15px]" />
      </colgroup>
      <tbody>
        {sections.map((section) => (
          <Fragment key={section.title}>
            <tr className="h-6 bg-[#e4e4e4]">
              <th colSpan={2} className={`p-0 text-left font-medium whitespace-nowrap text-[#222] ${nameSize(section.title)}`}>{section.title}</th>
              <td className="p-0 pb-[5px]">
                <button type="button" aria-label={`${section.title}を折りたたむ`} className="ml-[3px] block">
                  <svg width="7" height="8" viewBox="0 0 7 8" fill="none" aria-hidden="true">
                    <path d="M.500 3.500l3-3 3 3M.500 7.500l3-3 3 3" stroke="#222" strokeWidth="1.200" />
                  </svg>
                </button>
              </td>
            </tr>
            {section.rows.map((row) => (
              <tr key={row.name} className="h-6 border-b border-[#e6e6e6] bg-white">
                <td className={`p-0 pb-[2px] pl-[7px] whitespace-nowrap ${nameSize(row.name)} ${row.readOnly ? 'text-[#858585]' : ''}`}>{row.name}</td>
                <td className="border-x border-[#e6e6e6] p-0"><PropertyValue row={row} /></td>
                <td className="p-0 pl-px">
                  {row.more && <button type="button" aria-label={`${row.name}を編集`} className="block h-[21px] w-[12px] border border-[#b5b5b5] bg-[#f3f3f3]" />}
                </td>
              </tr>
            ))}
          </Fragment>
        ))}
        <tr className="h-6 bg-white">
          <td />
          <td className="border-x border-[#e6e6e6]" />
          <td />
        </tr>
      </tbody>
    </table>
  );
}

function Palette() {
  return (
    <aside className="flex w-[342px] shrink-0 flex-col overflow-hidden border-r-4 border-[#bdbdbd] bg-[#f2f2f2] text-[#333]">
      <div className="flex h-[21px] shrink-0 items-center justify-between bg-[#d9d9d9] pr-[3px]">
        <h2 className="text-[13px]">プロパティ</h2>
        <button type="button" aria-label="閉じる">
          <svg width="13" height="13" viewBox="0 0 13 13" className="block" aria-hidden="true">
            <path d="M1 1l11 11M12 1L1 12" stroke="#777" strokeWidth="2.500" />
          </svg>
        </button>
      </div>
      <div className="mr-[2px] flex shrink-0 flex-col">
        <button type="button" className="flex h-[84px] w-full items-center border-t border-r border-[#bcbcbc] pt-[2px] pr-2 pl-px text-left text-[14px] leading-5">
          <span className="flex h-full w-[82px] flex-col border border-b-0 border-[#bcbcbc] bg-white">
            <span className="h-[41px] border-b-2 border-[#444]" />
          </span>
          <span className="ml-[6px] flex flex-1 flex-col pt-px">
            <span>天井</span>
            <span className="text-[13px]">ボードt9.5</span>
          </span>
          <Caret className="h-[5px] w-[10px] text-[#999]" />
        </button>
        <div className="flex h-[35px] items-start gap-[3px]">
          <div className="relative h-[31px] w-[239px] border-b-2 border-[#c8c8c8]">
            <select aria-label="カテゴリ" className="h-full w-full appearance-none bg-transparent pl-[1px] text-[14px] outline-none">
              <option>天井</option>
            </select>
            <svg width="9" height="6" viewBox="0 0 9 6" fill="none" className="pointer-events-none absolute top-3 right-[6px]" aria-hidden="true">
              <path d="M.500.500l4 4 4-4" stroke="#888" strokeWidth="1.600" />
            </svg>
          </div>
          <button type="button" className="flex h-[31px] items-center gap-[2px] text-[14px] whitespace-nowrap">
            <EditTypeIcon />
            タイプ編集
          </button>
        </div>
      </div>
      <div className="mr-[2px] border-r border-[#e6e6e6]">
        <PropertyTable />
      </div>
    </aside>
  );
}

const tabs = [
  { label: '断面図 B', icon: <SectionTabIcon /> },
  { label: '1FL', icon: <PlanTabIcon /> },
  { label: 'A101 - 無題', icon: <SheetTabIcon /> },
  { label: '2FL', icon: <CeilingTabIcon /> },
  { label: '印刷用2FL', icon: <CeilingTabIcon /> },
  { label: '1FL', icon: <CeilingTabIcon /> },
  { label: '1FL', icon: <PlanTabIcon active />, active: true },
];

function ViewTabs() {
  return (
    <nav className="flex h-[25px] shrink-0 overflow-hidden bg-[#cbcbcb] text-[14px] text-[#444]">
      {tabs.map((tab, i) => (
        <button
          key={i}
          type="button"
          className={`flex w-[160px] shrink-0 items-center gap-[9px] pl-[6px] whitespace-nowrap ${tab.active ? 'bg-white font-semibold text-[#222]' : ''}`}>
          {tab.icon}
          {tab.label}
        </button>
      ))}
    </nav>
  );
}

function FloorPlan() {
  return (
    <svg className="block min-h-0 w-full flex-1 bg-white" fill="none" aria-label="天井伏図">
      <g transform="translate(-342 -176)" shapeRendering="crispEdges">
        <g stroke="#a9a9a9">
          <path d="M344 310.500H586M594 310.500h6M608 310.500H941M950 310.500h6M964 310.500H1297M1306 310.500h5M1320 310.500H3000" />
          <path d="M720.500 178V402M720.500 411v6M720.500 425V752M1276.500 178V402M1276.500 411v6M1276.500 425V752M1185.500 178V752" />
          <path d="M3000 302.500H712.500V752M712 360.500H528.500V738.500H712" />
          <path d="M967.500 319V408.500H1267M984.500 319V391.500H1267" />
          <path d="M1354.500 319.500H1345.500V380.500H1284.500V431.500H1354.500zM3000 441.500H1284.500V752" />
          <path d="M1284 601.500H3000M1312.500 602V669.500H3000M1284 691.500H3000M1284 701.500H3000M3000 708.500H1312.500V752" />
          <path d="M728.500 752V708.500H1267.500V752M967.500 709V752" />
        </g>
        <g stroke="#a5d6a7">
          <path d="M442.500 178V750" strokeDasharray="6 5" strokeDashoffset="2" />
          <path d="M831.500 424V455M1228.500 425V455M831.500 645V670M1228.500 645V671" strokeDasharray="6 5" strokeDashoffset="2" />
          <path d="M805 455.500H831M1229 455.500H1254M805 644.500H831M1229 644.500H1277" strokeDasharray="5 6" />
        </g>
        <g stroke="#f0f" strokeWidth="2">
          <path d="M778 319H1267V691H728V369H778z" />
          <path d="M831 455H1228V644H831z" />
        </g>
      </g>
    </svg>
  );
}

// lower edge of the sheet that runs on under the palette
function SheetStrip() {
  return (
    <svg className="block h-[82px] w-full shrink-0 bg-white" fill="none" aria-hidden="true">
      <g shapeRendering="crispEdges">
        <g stroke="#a9a9a9">
          <path d="M11.500 0V82M34.500 0V49.500H746.500V0M34.500 82V71.500H746.500V82" />
          <path d="M349.500 72V82M638.500 0V82M768.500 0V82M768 49.500H794M768 62.500H794" />
          <path d="M22 0V82M757 0V82" strokeWidth="2" />
        </g>
        <path d="M695.500 0V2M695.500 8V13M695.500 19V23M169.500 7V11" stroke="#a5d6a7" />
        <path d="M169.500 0V6M169.500 15V22" stroke="#7cc4d0" />
      </g>
    </svg>
  );
}

export default function App() {
  return (
    <div className="flex h-screen w-full flex-col overflow-hidden bg-white font-['Open_Sans','Noto_Sans_CJK_JP',sans-serif] [font-feature-settings:'palt']">
      <Ribbon />
      <div className="flex h-[35px] shrink-0 items-center border-b-2 border-[#bdbdbd] bg-[#dfeeed] pl-2 text-[14px] text-[#444]">
        修正 | 天井の境界を作成
      </div>
      <main className="flex min-h-0 flex-1">
        <Palette />
        <div className="flex min-w-0 flex-1 flex-col">
          <ViewTabs />
          <FloorPlan />
        </div>
      </main>
      <SheetStrip />
    </div>
  );
}
